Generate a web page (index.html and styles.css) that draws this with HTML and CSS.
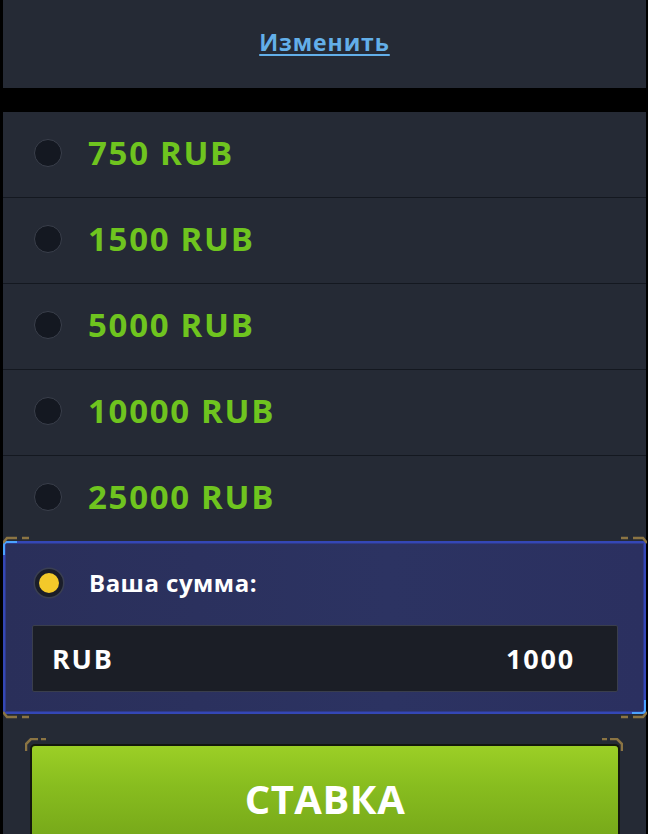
FILE: index.html
```html
<!DOCTYPE html>
<html lang="ru">
<head>
<meta charset="utf-8">
<link rel="stylesheet" href="styles.css">
</head>
<body>
<div class="page">
  <section class="panel top-panel">
    <a class="change-link" href="#">Изменить</a>
  </section>

  <section class="panel amounts">
    <div class="row"><span class="radio"></span><span class="amount">750 RUB</span></div>
    <div class="row"><span class="radio"></span><span class="amount">1500 RUB</span></div>
    <div class="row"><span class="radio"></span><span class="amount">5000 RUB</span></div>
    <div class="row"><span class="radio"></span><span class="amount">10000 RUB</span></div>
    <div class="row"><span class="radio"></span><span class="amount">25000 RUB</span></div>

    <div class="custom">
      <svg class="gold gold-tl" width="30" height="8" viewBox="0 0 30 8"><path d="M0 7 L4 2 L14 2 M19 2 L26 2" stroke="#8b7443" stroke-width="2.5" fill="none"/></svg>
      <svg class="gold gold-tr" width="30" height="8" viewBox="0 0 30 8"><path d="M30 7 L26 2 L16 2 M11 2 L4 2" stroke="#8b7443" stroke-width="2.5" fill="none"/></svg>
      <svg class="gold gold-bl" width="30" height="8" viewBox="0 0 30 8"><path d="M0 1 L4 6 L14 6 M19 6 L26 6" stroke="#8b7443" stroke-width="2.5" fill="none"/></svg>
      <svg class="gold gold-br" width="30" height="8" viewBox="0 0 30 8"><path d="M30 1 L26 6 L16 6 M11 6 L4 6" stroke="#8b7443" stroke-width="2.5" fill="none"/></svg>
      <div class="custom-head">
        <span class="radio radio-on"></span>
        <span class="custom-label">Ваша сумма:</span>
      </div>
      <div class="input">
        <span class="cur">RUB</span>
        <span class="val">1000</span>
      </div>
    </div>

    <div class="btn-wrap">
      <svg class="gold btn-tl" width="22" height="14" viewBox="0 0 22 14"><path d="M1 13 L1 6 L6 1 L13 1 M16 1 L21 1" stroke="#8b7443" stroke-width="2.5" fill="none"/></svg>
      <svg class="gold btn-tr" width="22" height="14" viewBox="0 0 22 14"><path d="M21 13 L21 6 L16 1 L9 1 M6 1 L1 1" stroke="#8b7443" stroke-width="2.5" fill="none"/></svg>
      <button class="bet">СТАВКА</button>
    </div>
  </section>
</div>
</body>
</html>
```

FILE: styles.css
```css
html, body {
  margin: 0;
  padding: 0;
  background: #000;
}
body {
  font-family: "Open Sans", "Noto Sans", "DejaVu Sans", sans-serif;
  width: 648px;
  height: 834px;
  overflow: hidden;
}
.page {
  padding: 0 2px 0 3px;
  display: flex;
  flex-direction: column;
  gap: 24px;
}
.panel {
  background: #252a35;
}
.top-panel {
  height: 88px;
  display: flex;
  align-items: center;
  justify-content: center;
}
.change-link {
  color: #63afe9;
  font-size: 23px;
  font-weight: 700;
  letter-spacing: 0.9px;
  text-decoration: underline;
  text-decoration-thickness: 2px;
  text-underline-offset: 3px;
  margin-bottom: 4px;
}
.amounts {
  display: flex;
  flex-direction: column;
}
.row {
  height: 85px;
  border-bottom: 1px solid #141820;
  display: flex;
  align-items: center;
  box-sizing: content-box;
  padding-bottom: 0;
}
.row .radio {
  margin-top: -3px;
}
.radio {
  width: 28px;
  height: 28px;
  border-radius: 50%;
  background: #141821;
  border: 1.5px solid #3a3f4b;
  margin-left: 31px;
  margin-right: 26px;
  flex-shrink: 0;
  box-sizing: border-box;
}
.amount {
  color: #6fc41f;
  font-size: 33px;
  font-weight: 700;
  letter-spacing: 1.7px;
  margin-top: -4px;
}
.custom {
  position: relative;
  margin-top: -1px;
  height: 173px;
  background: linear-gradient(90deg, #2a2f5a 0%, #2c3362 60%, #2b3060 100%);
  border: 2px solid #3447b6;
  border-radius: 3px;
  box-sizing: border-box;
  box-shadow: inset 0 0 0 1px #2f3a8a;
  display: flex;
  flex-direction: column;
}
.custom::before, .custom::after {
  content: "";
  position: absolute;
  width: 12px;
  height: 12px;
}
.custom::before {
  left: -2px;
  top: -2px;
  border-left: 2px solid #4aa3ff;
  border-top: 2px solid #4aa3ff;
  border-top-left-radius: 4px;
}
.custom::after {
  right: -2px;
  bottom: -2px;
  border-right: 2px solid #4aa3ff;
  border-bottom: 2px solid #4aa3ff;
  border-bottom-right-radius: 4px;
}
.gold {
  position: absolute;
}
.gold-tl { left: -2px; top: -7px; }
.gold-tr { right: -3px; top: -7px; }
.gold-bl { left: -2px; bottom: -7px; }
.gold-br { right: -3px; bottom: -7px; }
.custom-head {
  height: 82px;
  display: flex;
  align-items: center;
}
.custom-head .radio {
  margin-left: 30px;
  margin-top: -2px;
}
.radio-on {
  background: #f3c92a;
  border: 4px solid #1a1d29;
  box-shadow: 0 0 0 1.5px #3a3f52;
}
.custom-label {
  color: #fff;
  font-size: 24px;
  font-weight: 700;
  letter-spacing: 0.5px;
  margin-top: -3px;
}
.input {
  margin: 0 26px 0 27px;
  height: 67px;
  background: #1b1e26;
  border: 1.5px solid #3a3e4c;
  border-radius: 2px;
  box-sizing: border-box;
  display: flex;
  align-items: center;
  justify-content: space-between;
  padding: 0 42px 0 19px;
  color: #fff;
  font-size: 27px;
  font-weight: 700;
  letter-spacing: 1.8px;
}
.btn-wrap {
  position: relative;
  padding: 30px 26px 0 27px;
  height: 90px;
}
.btn-tl { left: 22px; top: 24px; }
.btn-tr { right: 23px; top: 24px; }
.bet {
  display: block;
  width: 100%;
  height: 100%;
  border: none;
  border-top: 2px solid #14180c;
  border-left: 2px solid #14180c;
  border-right: 2px solid #14180c;
  border-radius: 5px 5px 0 0;
  background: linear-gradient(180deg, #9ccf26 0%, #88bd1f 45%, #78aa1a 100%);
  color: #fff;
  font-family: "Open Sans", "Noto Sans", sans-serif;
  font-size: 40px;
  font-weight: 700;
  letter-spacing: 0.5px;
  padding: 16px 0 0 0;
}
```
